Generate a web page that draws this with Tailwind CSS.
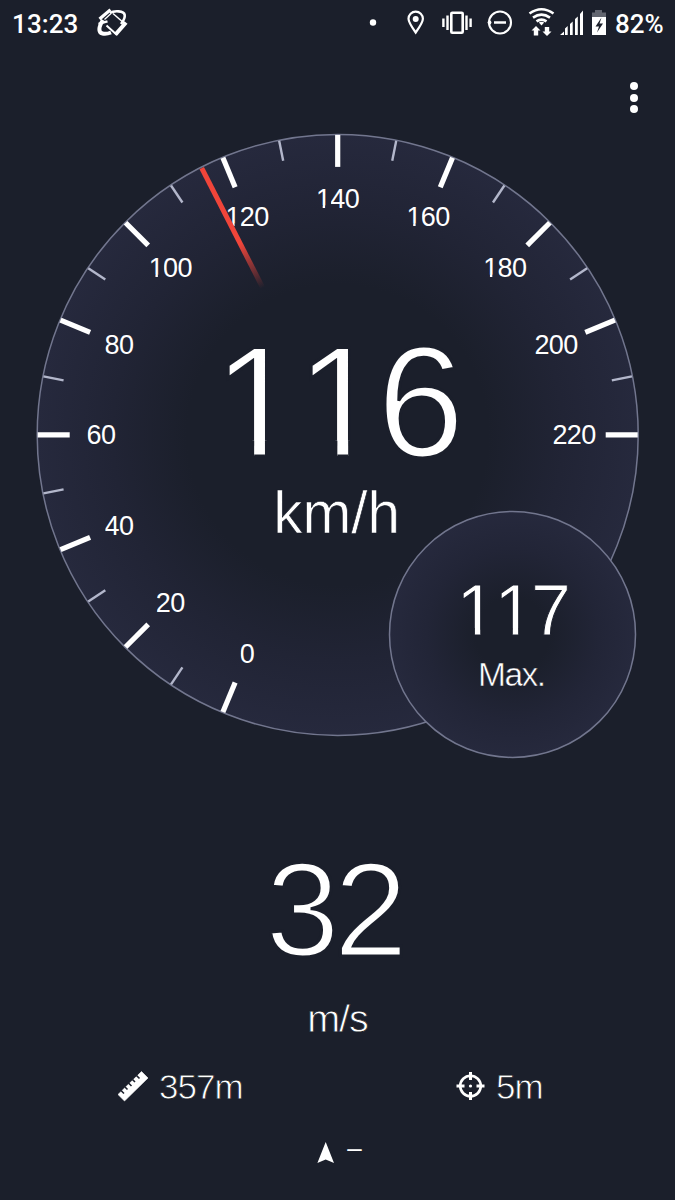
<!DOCTYPE html>
<html lang="en">
<head>
<meta charset="utf-8">
<title>Speedometer</title>
<script src="https://cdn.jsdelivr.net/npm/@tailwindcss/browser@4"></script>
</head>
<body class="bg-[#1b1f2b] text-white">
<main class="w-[675px] h-[1200px] flex flex-col overflow-hidden bg-[#1b1f2b]">
  <header class="h-[50px] shrink-0 flex items-start font-['Roboto',sans-serif] font-medium text-[26px] leading-[48px]">
    <span class="pl-[12px] w-[95px] tracking-[0.1px]">13:23</span>
    <svg class="w-[35px] h-[50px]" viewBox="95 0 35 50" fill="none" stroke="#fff">
      <path d="M99.500 19 110.500 9.800" stroke-width="3.200"/>
      <path d="M104.500 19.500 111 13.500" stroke-width="1.300"/>
      <path d="M110 13 C114 10.500 124 10.500 124.700 15 C125.200 18.500 123 21.500 121 24" stroke-width="2.600"/>
      <path d="M113 13.500 125 24" stroke-width="1.500"/>
      <path d="M126 22.500 115.500 34.500" stroke-width="4"/>
      <path d="M117 35 106.500 25.500" stroke-width="2"/>
      <path d="M103 20 C98.500 27 98 32.500 102.500 33.500 Q106 34.500 111 32.500" stroke-width="4"/>
      <path d="M98.500 23.800 107.500 21.300" stroke-width="2.400"/>
    </svg>
    <span class="grow"></span>
    <svg class="w-[30px] h-[50px]" viewBox="365 0 30 50"><circle cx="373" cy="22.500" r="3.200" fill="#fff"/></svg>
    <svg class="w-[40px] h-[50px]" viewBox="395 0 40 50"><path d="M415.700 32.500C411 26 408.500 22.500 408.500 18.800a7.200 7.200 0 0 1 14.400 0C422.900 22.500 420.400 26 415.700 32.500Z" fill="none" stroke="#fff" stroke-width="2.200"/><circle cx="415.700" cy="19" r="3" fill="#fff"/></svg>
    <svg class="w-[45px] h-[50px]" viewBox="435 0 45 50" fill="none" stroke="#fff"><rect x="451.300" y="12.800" width="11.400" height="19.900" rx="1" stroke-width="2.600"/><path d="M447.500 15.500V30M466.500 15.500V30" stroke-width="2.400"/><path d="M443.400 18.500V27M470.600 18.500V27" stroke-width="2.400"/></svg>
    <svg class="w-[45px] h-[50px]" viewBox="480 0 45 50" fill="none" stroke="#fff" stroke-width="2.100"><circle cx="500" cy="22.500" r="11"/><path d="M494 22.500h12" stroke-width="2.500"/><circle cx="489.500" cy="22.500" r="1.900" fill="#fff" stroke="none"/></svg>
    <svg class="w-[33px] h-[50px]" viewBox="525 0 33 50"><path d="M529.500 13.500Q541.500 5 553.500 13.500M533 17.600Q541.500 11.600 550 17.600M536.500 21.400Q541.500 17.800 546.500 21.400" fill="none" stroke="#fff" stroke-width="2.600"/><path d="M538.800 22.500Q541.500 21 544.200 22.500L541.500 25.500Z M536 26 540.500 30.500H538.200V35.500H533.800V30.500H531.500Z M547 36 551.500 31.500H549.200V27H544.800V31.500H542.500Z" fill="#fff"/></svg>
    <svg class="w-[27px] h-[50px]" viewBox="558 0 27 50"><path d="M560 35 564 31.500V35ZM565 35V28.500L567.700 26V35ZM570 35V24L572.700 21.500V35ZM575 35V19L577.800 16.500V35ZM580 35V14L583 10.500V35Z" fill="#fff"/></svg>
    <svg class="w-[30px] h-[50px]" viewBox="585 0 30 50"><path d="M595 10h7v2.500h4V17H592v-4.500h3Z" fill="#62656f"/><path d="M592 17h14v18H592Z" fill="#fff"/><path d="M601.500 17.500 595.500 26.500H599L597 32.500 603 23.500H599.500Z" fill="#1b1f2b"/></svg>
    <span class="w-[60px] whitespace-nowrap">82%</span>
  </header>
  <nav class="h-[80px] shrink-0 flex justify-end items-center pr-[37px]">
    <div class="flex flex-col gap-[3.500px] pt-[15px]">
      <i class="block size-[8px] rounded-full bg-white"></i><i class="block size-[8px] rounded-full bg-white"></i><i class="block size-[8px] rounded-full bg-white"></i>
    </div>
  </nav>
  <svg id="gauge" class="w-[675px] h-[640px] shrink-0 font-['Liberation_Sans',Arial,sans-serif]" viewBox="0 130 675 640">
    <defs>
      <radialGradient id="dial"><stop offset=".5" stop-color="#1b1f2b"/><stop offset=".75" stop-color="#212435"/><stop offset="1" stop-color="#26293d"/></radialGradient>
      <radialGradient id="disc"><stop offset=".3" stop-color="#1b1f2b"/><stop offset=".7" stop-color="#222537"/><stop offset="1" stop-color="#26293d"/></radialGradient>
      <linearGradient id="fade" gradientUnits="userSpaceOnUse" x1="0" y1="-165" x2="0" y2="-215"><stop offset="0" stop-color="#f0453a" stop-opacity="0"/><stop offset="1" stop-color="#f0453a"/></linearGradient>
    </defs>
    <circle cx="337.700" cy="434.900" r="300.500" fill="url(#dial)" stroke="#72768e" stroke-width="1.500"/>
    <g id="ticks" transform="translate(337.700 434.900)"></g>
    <g id="labels"></g>
    <rect x="-2.500" y="-299.500" width="5" height="135" fill="url(#fade)" transform="translate(337.700 434.900) rotate(-27)"/>
    <g id="speed"></g>
    <text x="273.200" y="532.700" font-size="58.500" fill="#fff" stroke="#1b1f2b" stroke-width=".7">km/h</text>
    <circle cx="512.500" cy="634.400" r="123" fill="url(#disc)" stroke="#72768e" stroke-width="1.500"/>
    <g id="max"></g>
    <text x="478" y="685.700" font-size="33.500" letter-spacing="-1.500" fill="#fff" stroke="#1c202d" stroke-width=".5">Max.</text>
  </svg>
  <section class="h-[275px] shrink-0 flex flex-col items-center font-['Liberation_Sans',Arial,sans-serif]">
    <svg class="w-[675px] h-[222px] shrink-0" viewBox="0 770 675 222"><g id="metric"></g></svg>
    <div class="text-[39.500px] leading-[46px] mt-[3px] tracking-[-1px] [-webkit-text-stroke:0.800px_#1b1f2b]">m/s</div>
  </section>
  <section class="h-[80px] shrink-0 flex font-['Liberation_Sans',Arial,sans-serif] text-[35px] leading-[83px] tracking-[-1px]">
    <div class="w-[338px] pl-[118px] flex">
      <svg class="w-[30px] h-[80px] mr-[11px]" viewBox="118 1045 30 80"><path d="M118 1094.500 141.500 1071.500 148 1078 124.500 1101Z" fill="#fff" stroke="#fff" stroke-width=".6" stroke-linejoin="round"/><path d="M121 1090.500 124 1093.500M125 1087 127.500 1089.500M128.500 1083 131.500 1086M132.500 1079.500 135 1082M136.500 1075.500 139.500 1078.500" stroke="#1b1f2b" stroke-width="1.600"/></svg>
      <span class="[-webkit-text-stroke:0.800px_#1b1f2b]">357m</span>
    </div>
    <div class="pl-[117px] flex">
      <svg class="w-[30px] h-[80px] mr-[11px]" viewBox="455 1045 30 80" fill="none" stroke="#fff"><circle cx="470.500" cy="1086" r="10.300" stroke-width="2.600"/><path d="M470.500 1072v8M470.500 1092v8M456.500 1086h8M476.500 1086h8" stroke-width="3"/><circle cx="470.500" cy="1086" r="1.600" fill="#fff" stroke="none"/></svg>
      <span class="[-webkit-text-stroke:0.800px_#1b1f2b]">5m</span>
    </div>
  </section>
  <footer class="h-[75px] shrink-0 flex justify-center pl-[3px] font-['Liberation_Sans',Arial,sans-serif]">
    <svg class="w-[20px] h-[60px] mr-[11px]" viewBox="317 1125 20 60"><path d="M326.700 1142 335 1163 326.700 1159.500 318.400 1163Z" fill="#fff"/></svg>
    <span class="text-[26px] leading-[47px]">–</span>
  </footer>
</main>
<script>
const NS = 'http://www.w3.org/2000/svg';
const add = (parent, tag, attrs) => {
  const el = document.createElementNS(NS, tag);
  for (const k in attrs) el.setAttribute(k, attrs[k]);
  parent.appendChild(el);
  return el;
};
const em = 2048;
// Draws light digits; the numeral 1 is clipped to a plain stem without its foot.
function digits(id, str, xs, base, size, thin, bg) {
  const g = document.getElementById(id), u = size / em, clipId = 'clip-' + id + '-' + str;
  const clip = add(g, 'clipPath', { id: clipId });
  [...str].forEach((c, i) => {
    const w = 1139 * u, top = base - size;
    if (c === '1') {
      add(clip, 'rect', { x: xs[i], y: top, width: w - 60 * u, height: size - 175 * u - thin / 2 });
      add(clip, 'rect', { x: xs[i] + 517 * u + thin / 2, y: top, width: 180 * u - thin, height: size + 5 });
    } else add(clip, 'rect', { x: xs[i] + 50 * u, y: top, width: w - 50 * u, height: size + 10 });
  });
  const t = add(g, 'text', { x: xs.join(' '), y: base, 'font-size': size, fill: '#fff', stroke: bg, 'stroke-width': thin, 'clip-path': `url(#${clipId})` });
  t.textContent = str;
}
const ticks = document.getElementById('ticks');
for (let i = 0; i <= 22; i++) {
  const a = -157.5 + i * 11.25, major = i % 2 === 0;
  if (a > 91) break;
  add(ticks, 'path', { d: major ? 'M0-300V-268' : 'M0-300V-279.500', stroke: major ? '#fff' : '#b3b7cb', 'stroke-width': major ? 5.2 : 2.4, transform: `rotate(${a})` });
  if (major) {
    const r = a * Math.PI / 180, s = String(i * 10), p = 14.4;
    const cx = 337.8 + 236.5 * Math.sin(r), cy = 434.9 - 236.5 * Math.cos(r);
    digits('labels', s, [...s].map((_, k) => cx + (k - s.length / 2) * p - 0.3), cy + 9.5, 27, 0, 'none');
  }
}
digits('speed', '116', [212.9, 296.1, 377], 455.8, 157.4, 3, '#1b1f2b');
digits('max', '117', [456.3, 494.2, 530.9], 634.7, 71.8, 1, '#1c202d');
digits('metric', '32', [265.6, 333.8], 956.4, 133.2, 3, '#1b1f2b');
</script>
</body>
</html>
